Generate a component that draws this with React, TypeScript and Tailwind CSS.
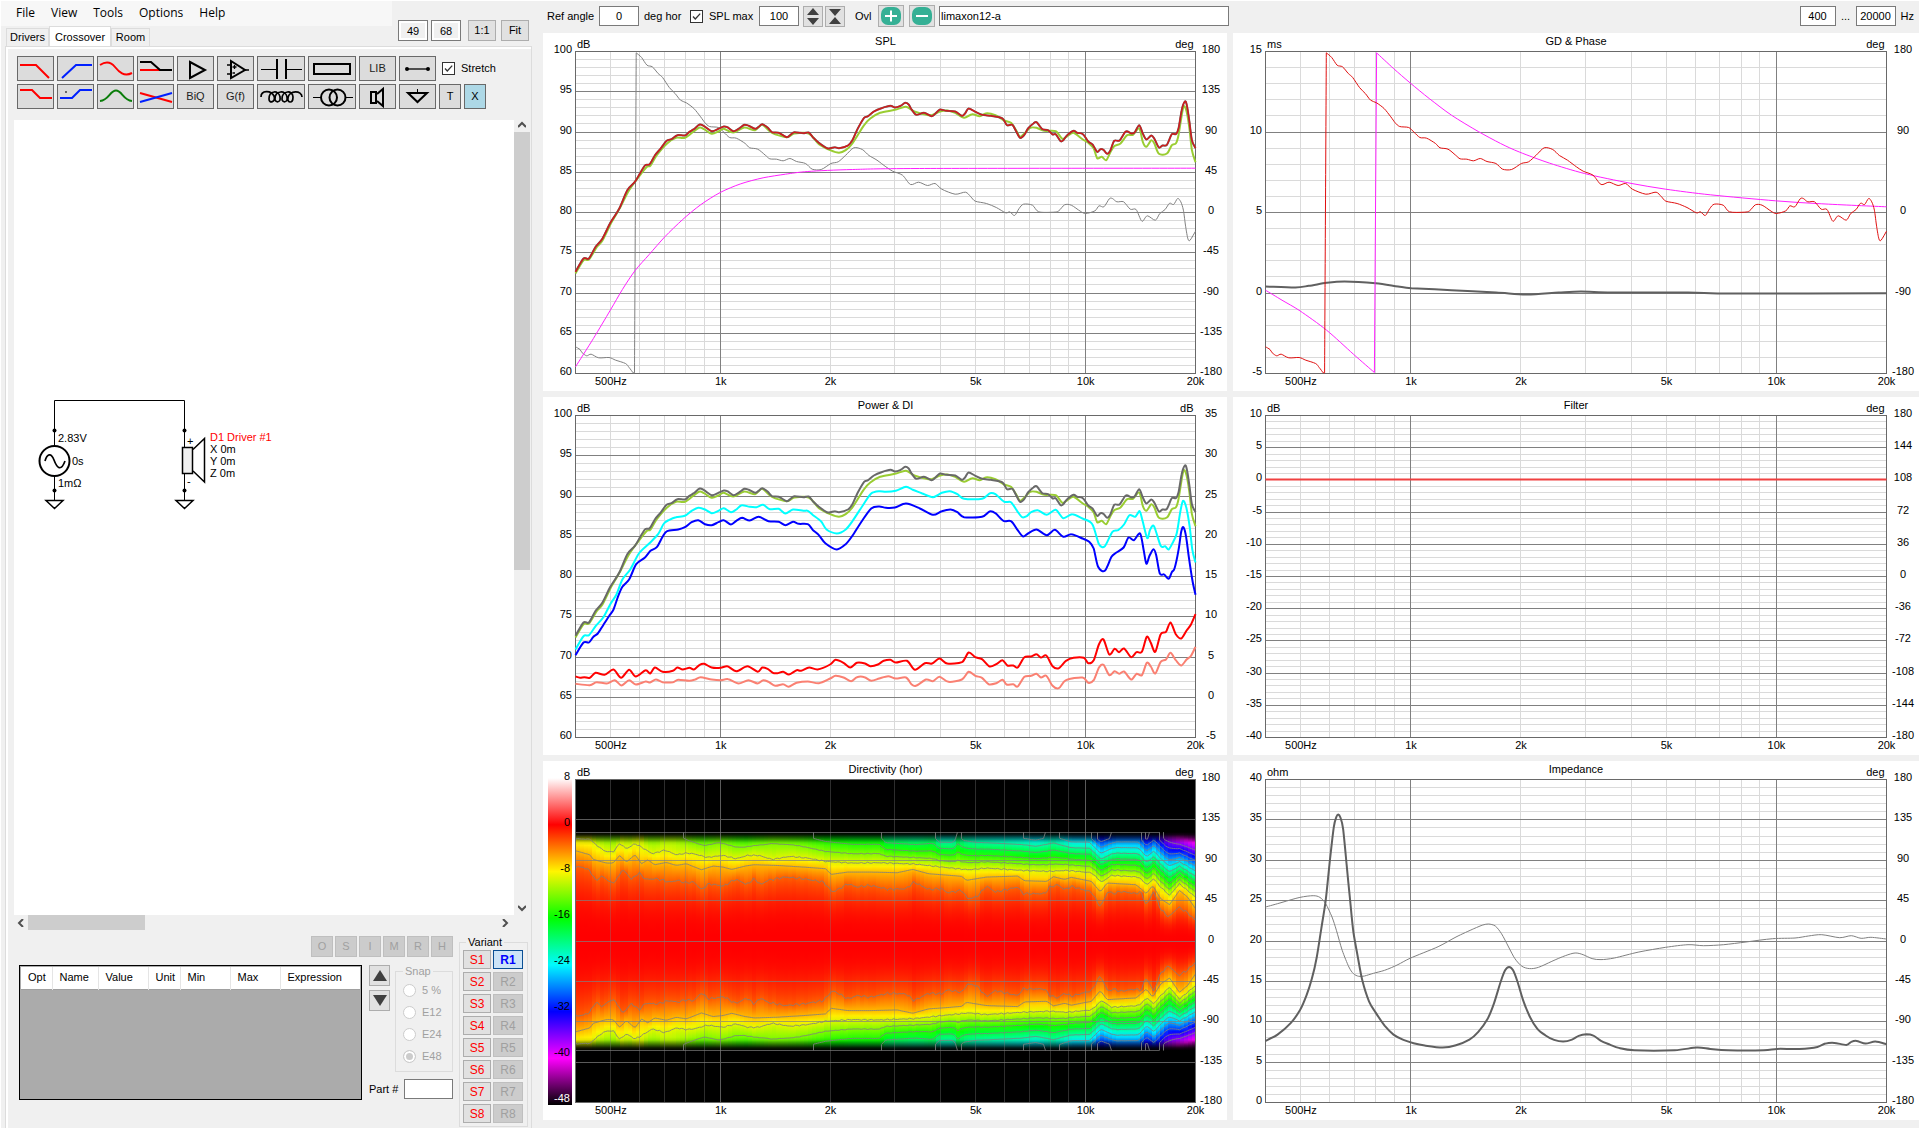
import React from 'react';

/* ---------- chart geometry ---------- */

const F_MIN = 400;
const F_MAX = 20000;
const LEFT = 32.5;
const TOP = 18.5;

const MINOR_F = [500, 600, 700, 800, 900, 2000, 3000, 4000, 5000, 6000, 7000, 8000, 9000];
const MAJOR_F = [1000, 10000];
const F_LABELS: [number, string][] = [
  [500, '500Hz'],
  [1000, '1k'],
  [2000, '2k'],
  [5000, '5k'],
  [10000, '10k'],
  [20000, '20k'],
];

type Pt = [number, number];
type Space = { x: number; y: number; w: number; h: number };
type Trace = { parts: string[]; space: Space; color: string; width: number };

const parse = (s: string): Pt[] =>
  s.trim().split(/\s+/).map((p) => p.split(',').map(Number) as Pt);

const snap = (v: number) => Math.floor(v) + 0.5;
const fx = (f: number, w: number) => LEFT + (Math.log(f / F_MIN) / Math.log(F_MAX / F_MIN)) * w;

/* Catmull-Rom through the points of each part; parts are joined by straight lines. */
function tracePath(parts: string[], sp: Space, w: number, h: number): string {
  let d = '';
  parts.forEach((part) => {
    const p = parse(part).map(
      ([x, y]): Pt => [LEFT + ((x - sp.x) / sp.w) * w, TOP + ((y - sp.y) / sp.h) * h],
    );
    d += `${d ? 'L' : 'M'}${p[0][0].toFixed(1)} ${p[0][1].toFixed(1)}`;
    for (let i = 0; i < p.length - 1; i++) {
      const a = p[Math.max(0, i - 1)];
      const b = p[i];
      const c = p[i + 1];
      const e = p[Math.min(p.length - 1, i + 2)];
      const k = 7;
      d += `C${(b[0] + (c[0] - a[0]) / k).toFixed(1)} ${(b[1] + (c[1] - a[1]) / k).toFixed(1)} ${(c[0] - (e[0] - b[0]) / k).toFixed(1)} ${(c[1] - (e[1] - b[1]) / k).toFixed(1)} ${c[0].toFixed(1)} ${c[1].toFixed(1)}`;
    }
  });
  return d;
}

/* ---------- trace data ---------- */

const S_SPL: Space = { x: 80, y: 154, w: 1388, h: 966 };
const S_PWR: Space = { x: 80, y: 76, w: 1388, h: 966 };
const S_GD: Space = { x: 103, y: 154, w: 1392, h: 966 };
const S_IMP: Space = { x: 103, y: 72, w: 1392, h: 970 };

const SPL_REF =
  '80,815 98,775 110,775 125,740 140,716 158,668 178,625 196,570 213,545 225,518 236,495 246,492 258,465 270,446 284,422 295,417 308,405 325,406 335,395 345,387 358,373 368,378 385,393 400,386 412,379 420,381 433,393 445,386 458,374 468,377 482,386 490,380 498,372 510,382 520,396 535,398 553,411 562,403 570,396 590,399 602,397 612,412 625,428 645,445 660,441 670,444 690,436 700,420 712,385 726,353 735,348 748,334 765,324 785,317 795,322 808,317 818,308 826,313 832,327 843,344 860,338 877,348 885,341 896,328 910,332 930,334 945,347 952,340 960,325 975,335 990,344 1010,347 1035,354 1046,375 1058,374 1067,395 1075,413 1085,404 1093,385 1105,370 1112,366 1125,387 1138,390 1148,403 1155,402 1166,423 1172,420 1180,406 1195,392 1203,398 1216,402 1228,424 1238,434 1248,455 1255,447 1262,449 1270,461 1277,452 1286,422 1298,421 1312,394 1325,400 1332,396 1342,375 1350,400 1358,418 1369,406 1376,416 1386,442 1394,436 1404,434 1415,402 1424,402 1430,385 1437,330 1444,304 1448,312 1454,360 1460,420 1468,444';
const SPL_LW =
  '80,820 98,780 110,778 127,742 140,722 160,668 180,622 200,570 225,524 240,500 248,496 262,465 285,430 305,413 325,413 345,393 358,382 368,387 385,401 400,394 412,386 433,397 458,382 482,390 498,374 520,398 553,411 570,400 602,400 625,432 650,450 670,458 685,450 700,430 726,375 740,355 762,338 795,329 820,320 840,335 870,345 880,344 896,334 912,331 930,338 950,353 968,342 985,348 1000,339 1020,345 1040,361 1055,368 1067,392 1075,410 1085,400 1098,383 1112,383 1130,392 1155,393 1170,416 1182,407 1195,398 1216,418 1228,428 1240,445 1248,474 1258,470 1268,480 1278,455 1286,438 1300,430 1315,405 1328,404 1342,385 1350,425 1358,440 1369,420 1376,430 1386,461 1404,460 1415,435 1424,430 1430,405 1440,325 1446,325 1454,380 1460,450 1468,486';
const PHASE = [
  '80,1040 90,1048 95,1058 105,1067 115,1062 132,1073 155,1072 170,1080 192,1090 200,1102 209,1118',
  '212,1118 216,158',
  '216,158 228,172 240,195 252,200 265,220 275,232 290,262 303,280 315,300 328,308 345,325 360,350 370,368 380,379 400,382 412,396 425,412 440,414 460,430 470,443 488,447 505,465 515,476 530,477 545,482 560,475 575,484 595,490 610,507 630,508 652,490 668,485 685,465 703,443 722,448 737,466 755,480 775,500 790,513 812,525 830,553 848,546 868,556 885,550 900,567 930,582 953,576 965,590 975,603 1000,610 1022,622 1043,638 1052,635 1063,646 1073,625 1083,612 1103,615 1117,635 1150,636 1162,632 1175,614 1190,615 1210,633 1222,640 1243,632 1252,617 1263,620 1275,596 1282,595 1292,605 1307,605 1322,627 1335,628 1348,663 1360,647 1378,660 1388,640 1400,628 1410,609 1419,613 1428,595 1435,605 1441,630 1446,680 1451,716 1456,720 1468,693',
];
const TARGET =
  '80,1100 120,1015 158,930 185,868 213,812 245,763 280,710 320,658 360,614 404,577 450,551 500,533 550,522 600,514 700,508 850,505 1468,504';
const TARGET_PHASE = [
  '103,870 140,900 180,932 240,990 300,1062 347,1117',
  '352,158 390,205 427,248 470,295 520,345 580,394 630,430 673,456 740,489 818,520 920,549 1000,567 1100,584 1246,602 1350,611 1495,620',
];
const GROUP_DELAY =
  '103,859 170,862 200,857 240,848 280,844 350,849 400,859 430,864 520,870 620,877 690,883 760,877 810,874 870,877 1050,877 1150,880 1495,879';
const EARLY =
  '80,778 98,738 110,735 125,708 142,682 158,642 172,612 185,568 203,537 222,490 245,460 265,432 278,400 290,389 305,381 325,377 340,362 355,353 370,358 385,369 400,362 412,354 428,366 440,358 452,345 470,350 485,351 500,344 515,357 535,356 550,370 567,358 590,362 600,362 612,375 630,394 642,418 665,430 685,418 700,393 725,342 742,310 760,303 775,305 797,302 820,290 835,299 855,309 880,321 900,308 918,303 935,312 950,326 990,326 1008,309 1020,312 1040,335 1055,336 1070,365 1080,381 1090,378 1100,366 1115,360 1135,374 1155,359 1172,384 1192,372 1215,385 1237,402 1252,462 1265,468 1282,425 1295,420 1308,403 1320,375 1333,380 1343,363 1350,395 1360,444 1366,420 1375,408 1390,467 1400,468 1408,478 1418,455 1426,430 1434,365 1440,332 1447,350 1455,410 1461,480 1468,517';
const POWER =
  '80,795 98,757 110,757 120,740 130,730 142,705 155,678 165,658 175,620 185,590 200,568 216,522 235,503 248,482 262,471 275,440 285,423 310,418 325,411 340,396 355,390 370,402 385,405 400,396 412,390 428,403 440,392 453,383 470,391 490,380 512,393 535,395 550,405 567,395 580,401 600,402 612,420 625,435 640,460 665,478 685,462 700,437 720,395 742,355 760,349 775,353 795,352 820,340 850,354 880,374 900,363 920,358 935,366 950,381 990,380 1007,364 1020,369 1038,392 1055,393 1070,420 1082,439 1093,430 1112,418 1135,435 1153,419 1172,440 1190,432 1215,445 1230,455 1240,475 1250,530 1265,542 1280,500 1290,488 1307,472 1318,442 1330,450 1344,430 1352,480 1358,521 1365,497 1374,477 1380,495 1388,550 1398,553 1408,566 1415,546 1421,535 1430,480 1436,425 1441,411 1447,440 1453,500 1461,570 1468,614';
const POWER_DI =
  '80,859 90,863 100,861 112,863 125,848 145,854 165,838 182,863 200,839 215,859 237,840 247,850 258,832 275,845 298,842 308,832 320,838 335,833 345,838 358,824 368,821 385,832 405,833 420,828 440,843 465,828 488,845 498,832 510,836 522,848 532,849 545,845 558,853 575,840 585,842 603,832 622,838 650,823 662,809 680,818 695,832 710,818 728,820 740,828 757,823 770,812 785,809 797,817 822,812 840,839 862,819 878,820 895,805 912,820 945,816 960,787 975,801 990,807 1007,829 1022,822 1036,810 1047,826 1060,826 1070,832 1085,801 1100,799 1112,792 1122,802 1134,796 1148,828 1162,834 1178,812 1195,803 1218,803 1228,819 1240,810 1252,762 1262,748 1275,793 1287,776 1297,786 1308,775 1324,801 1336,786 1348,785 1359,740 1368,758 1378,785 1390,732 1402,725 1412,697 1424,732 1436,745 1448,721 1458,703 1468,672';
const EARLY_DI =
  '80,881 112,885 127,876 150,880 168,870 183,886 200,870 215,883 237,874 247,877 260,868 275,876 298,876 310,869 335,872 348,868 360,861 385,868 405,870 422,867 445,880 467,870 488,880 500,870 512,875 527,887 545,882 557,890 575,878 600,874 625,879 650,865 662,857 680,862 697,873 710,861 727,861 742,872 760,865 780,858 797,865 820,862 832,882 842,887 865,868 880,873 895,860 915,875 945,868 960,845 975,857 990,863 1005,882 1022,879 1036,869 1045,883 1060,882 1070,889 1085,860 1100,857 1112,851 1122,862 1134,857 1148,887 1162,894 1178,870 1215,862 1228,878 1240,870 1252,832 1262,824 1275,855 1287,843 1297,851 1308,844 1324,868 1336,851 1348,855 1359,818 1368,829 1378,850 1390,815 1402,808 1412,788 1424,810 1436,826 1448,808 1458,797 1468,770';
const IMPEDANCE =
  '103,857 130,838 160,803 180,765 195,720 207,670 218,605 228,520 238,435 247,320 256,215 262,184 266,177 271,186 277,220 285,330 293,440 300,530 310,605 320,675 335,738 350,772 370,811 390,838 412,854 435,864 460,871 500,877 530,870 560,853 580,830 600,793 615,745 630,680 640,645 649,635 658,645 668,680 680,733 695,783 712,820 730,840 750,854 770,859 790,853 805,842 822,837 838,841 855,857 875,868 895,878 930,885 1020,885 1070,877 1100,881 1140,885 1220,885 1250,881 1300,881 1340,875 1358,865 1378,863 1405,869 1416,860 1428,857 1448,865 1470,859 1495,867';
const IMP_PHASE =
  '103,455 140,441 180,426 210,421 225,426 238,445 252,485 262,525 275,585 290,635 300,655 312,663 325,662 345,654 370,645 400,628 427,609 490,574 530,545 570,520 590,509 603,506 618,512 632,535 648,575 662,610 678,633 695,640 715,636 745,618 775,601 797,593 815,598 835,610 855,613 885,608 940,590 1000,576 1050,568 1085,571 1130,568 1180,560 1240,550 1290,548 1320,542 1350,538 1390,547 1416,541 1438,549 1460,546 1495,551';

/* ---------- chart components ---------- */

type ChartProps = {
  title: string;
  leftUnit: string;
  rightUnit: string;
  left: number[];
  right: number[];
  divisions: number;
  wide?: boolean;
  tall?: boolean;
  traces?: Trace[];
  leftLabels?: boolean;
  dark?: boolean;
  children?: React.ReactNode;
};

function range(from: number, to: number, step: number): number[] {
  const out: number[] = [];
  const n = Math.round((to - from) / step);
  for (let i = 0; i <= n; i++) out.push(from + i * step);
  return out;
}

function Chart({
  title, leftUnit, rightUnit, left, right, divisions,
  wide, tall, traces = [], leftLabels = true, dark, children,
}: ChartProps) {
  const vw = wide ? 686 : 684;
  const vh = tall ? 359 : 358;
  const w = wide ? 621 : 620;
  const h = tall ? 323 : 322;
  const right_ = LEFT + w;
  const bottom = TOP + h;
  const row = (i: number, n: number) => snap(TOP + (i / n) * h);
  const majors = left.length - 1;
  const minorColor = dark ? '#808080' : '#dadada';
  const rightX = wide ? 670 : 668;
  return (
    <svg
      viewBox={`0 0 ${vw} ${vh}`}
      role="img"
      aria-label={title}
      className="block h-auto w-full bg-white text-[11px]"
    >
      {children}
      <g stroke={minorColor} strokeWidth="1" opacity={dark ? 0.35 : 1}>
        {!dark &&
          range(1, divisions - 1, 1).map((i) => (
            <line key={i} x1={LEFT} x2={right_} y1={row(i, divisions)} y2={row(i, divisions)} />
          ))}
        {MINOR_F.map((f) => (
          <line key={f} x1={snap(fx(f, w))} x2={snap(fx(f, w))} y1={TOP} y2={bottom} />
        ))}
      </g>
      <g stroke="#808080" strokeWidth="1" opacity={dark ? 0.7 : 1}>
        {range(1, majors - 1, 1).map((i) => (
          <line key={i} x1={LEFT} x2={right_} y1={row(i, majors)} y2={row(i, majors)} />
        ))}
        {MAJOR_F.map((f) => (
          <line key={f} x1={snap(fx(f, w))} x2={snap(fx(f, w))} y1={TOP} y2={bottom} />
        ))}
      </g>
      <rect x={LEFT} y={TOP} width={w} height={h} fill="none" stroke="#696969" />
      {traces.map((t, i) => (
        <path
          key={i}
          d={tracePath(t.parts, t.space, w, h)}
          fill="none"
          stroke={t.color}
          strokeWidth={t.width}
          strokeLinejoin="round"
        />
      ))}
      <text x={LEFT + w / 2} y="12" textAnchor="middle">{title}</text>
      <text x="34" y="15">{leftUnit}</text>
      <text x={right_ - 2} y="15" textAnchor="end">{rightUnit}</text>
      {leftLabels &&
        left.map((v, i) => (
          <text key={v} x="29" y={row(i, majors) + 1.5} textAnchor="end">{v}</text>
        ))}
      {right.map((v, i) => (
        <text key={v} x={rightX} y={row(i, right.length - 1) + 1.5} textAnchor="middle">{v}</text>
      ))}
      {F_LABELS.map(([f, label]) => (
        <text key={label} x={fx(f, w)} y={vh - 6} textAnchor="middle">{label}</text>
      ))}
    </svg>
  );
}

/* ---------- directivity heat map ---------- */

const C3 = parse('80,335 95,335 112,345 125,375 140,362 160,383 172,375 183,345 192,350 205,372 222,352 237,372 262,370 290,380 308,375 325,382 345,380 362,403 378,385 412,392 437,372 450,378 463,388 480,370 495,388 510,375 550,365 590,370 635,380 655,410 668,402 690,385 710,395 740,390 780,402 820,400 838,380 870,402 900,400 912,412 945,405 958,430 978,425 1000,392 1020,410 1070,395 1082,415 1130,415 1142,395 1160,388 1175,403 1190,393 1235,410 1255,455 1272,408 1285,415 1300,408 1335,415 1345,408 1358,450 1374,408 1390,462 1408,485 1430,455 1450,472 1468,495');
const C6 = parse('80,286 112,298 120,312 149,323 164,323 179,300 194,320 213,298 228,325 242,313 257,328 283,321 306,330 328,325 362,343 388,332 410,335 430,342 460,332 480,328 530,330 590,335 640,340 652,357 690,350 740,350 800,352 835,342 870,355 920,360 945,363 955,375 1000,365 1070,362 1085,376 1135,378 1150,364 1175,372 1190,366 1235,378 1255,410 1270,383 1335,388 1358,415 1372,390 1390,430 1410,448 1432,405 1450,425 1468,460');
const C9 = parse('80,250 115,252 120,262 145,287 164,290 179,264 194,280 213,265 224,272 252,295 280,284 306,298 328,293 345,295 375,306 410,300 440,310 465,300 490,300 520,312 560,303 600,308 640,318 700,323 760,322 840,326 900,335 960,343 1000,338 1080,345 1140,348 1180,345 1235,352 1258,380 1280,360 1340,365 1360,388 1374,370 1390,395 1410,420 1432,385 1468,425');
const EDGE = parse('80,-9 115,-9 122,-11 150,-12 175,-12 182,-10 200,-11 225,-9 240,-12 265,-12 270,-11 300,-11 365,-14 400,-13 460,-15 520,-13 580,-14 640,-16 700,-17 760,-17 775,-20 840,-21 880,-20 895,-23 925,-23 935,-20 950,-22 980,-23 1080,-24 1110,-25 1150,-23 1190,-26 1230,-26 1255,-32 1290,-29 1340,-29 1358,-34 1375,-31 1400,-37 1430,-40 1468,-43');

function at(pts: Pt[], x: number): number {
  for (let i = 1; i < pts.length; i++) {
    if (x <= pts[i][0]) {
      const [x0, y0] = pts[i - 1];
      const [x1, y1] = pts[i];
      return y0 + ((x - x0) / (x1 - x0)) * (y1 - y0);
    }
  }
  return pts[pts.length - 1][1];
}

const MID = 558;
const RIM = 310;

const PALETTE: [number, number[]][] = [
  [8, [255, 255, 255]],
  [0, [255, 0, 0]],
  [-8, [255, 245, 0]],
  [-16, [0, 255, 0]],
  [-24, [0, 250, 255]],
  [-32, [0, 0, 255]],
  [-40, [255, 0, 255]],
  [-48, [0, 0, 0]],
];

function colorOf(db: number, fade: number): string {
  let c = PALETTE[PALETTE.length - 1][1];
  for (let i = 1; i < PALETTE.length; i++) {
    if (db >= PALETTE[i][0]) {
      const t = (PALETTE[i - 1][0] - db) / 8;
      c = PALETTE[i][1].map((v, k) => PALETTE[i - 1][1][k] * (1 - t) + v * t);
      break;
    }
  }
  return `rgb(${c.map((v) => Math.round(v * fade)).join(',')})`;
}

function knots(x: number): Pt[] {
  const ripple = Math.sin(x * 0.37) * 2 + Math.sin(x * 0.91) * 2;
  const d3 = MID - at(C3, x) + ripple;
  const d6 = Math.max(d3 + 10, MID - at(C6, x));
  const d9 = Math.max(d6 + 10, MID - at(C9, x) + ripple * 0.5);
  return [[d3, -3], [d6, -6], [d9, -9], [Math.max(RIM, d9 + 2), Math.min(-9.1, at(EDGE, x))]];
}

function level(k: Pt[], d: number): number {
  if (d <= k[0][0]) return -3 * Math.pow(d / k[0][0], 2.4);
  for (let i = 1; i < k.length; i++) {
    if (d <= k[i][0]) {
      return k[i - 1][1] + ((d - k[i - 1][0]) / (k[i][0] - k[i - 1][0])) * (k[i][1] - k[i - 1][1]);
    }
  }
  return k[k.length - 1][1];
}

function distanceOf(k: Pt[], db: number): number | null {
  for (let i = 0; i < k.length; i++) {
    if (k[i][1] <= db) {
      if (i === 0) return k[0][0];
      const t = (k[i - 1][1] - db) / (k[i - 1][1] - k[i][1]);
      return k[i - 1][0] + t * (k[i][0] - k[i - 1][0]);
    }
  }
  return null;
}

const STEPS = [-328, -320, -312, -304, -296, ...range(-288, 288, 16), 296, 304, 312, 320, 328];
const COL_W = 4;

function HeatMap() {
  const w = 620;
  const h = 323;
  const toY = (y: number) => TOP + ((y - 72) / 970) * h;
  const yTop = toY(MID - 328);
  const yBottom = toY(MID + 328);
  const columns = range(0, w / COL_W - 1, 1).map((i) => ({
    x: LEFT + i * COL_W,
    k: knots(80 + ((i + 0.5) * COL_W * 1388) / w),
  }));

  const contours: string[] = [];
  range(1, 12, 1).forEach((n) => {
    [-1, 1].forEach((side) => {
      let d = '';
      let open = false;
      for (let px = 0; px <= w; px += 2) {
        const dist = distanceOf(knots(80 + (px * 1388) / w), -3 * n);
        const inside = dist !== null && dist < RIM;
        const x = LEFT + px;
        const rim = toY(MID + side * 328).toFixed(1);
        if (inside) {
          const y = toY(MID + side * (dist as number)).toFixed(1);
          d += open ? `L${x} ${y}` : px === 0 ? `M${x} ${y}` : `M${x} ${rim}L${x} ${y}`;
        } else if (open) {
          d += `L${x} ${rim}`;
        }
        open = inside;
      }
      if (d) contours.push(d);
    });
  });

  return (
    <g>
      <defs>
        <linearGradient id="scale" x1="0" x2="0" y1="0" y2="1">
          {PALETTE.map(([db]) => (
            <stop key={db} offset={(8 - db) / 56} stopColor={colorOf(db, 1)} />
          ))}
        </linearGradient>
        {columns.map((c, i) => (
          <linearGradient key={i} id={`col${i}`} x1="0" x2="0" y1="0" y2="1">
            {STEPS.map((s) => {
              const a = Math.abs(s);
              const fade = Math.max(0, Math.min(1, (323 - a) / 29));
              return (
                <stop key={s} offset={((s + 328) / 656).toFixed(4)} stopColor={colorOf(level(c.k, a), fade)} />
              );
            })}
          </linearGradient>
        ))}
      </defs>
      <rect x={LEFT} y={TOP} width={w} height={h} fill="#000" />
      {columns.map((c, i) => (
        <rect key={i} x={c.x} y={yTop} width={COL_W} height={yBottom - yTop} fill={`url(#col${i})`} shapeRendering="crispEdges" />
      ))}
      <g fill="none" stroke="#808080" strokeWidth="1" opacity="0.85">
        {contours.map((d, i) => (
          <path key={i} d={d} />
        ))}
        <path d={`M${LEFT} ${snap(yTop)}H616M${LEFT} ${snap(yBottom)}H616`} opacity="0.8" />
      </g>
      <rect x="5" y="17" width="24" height="327" fill="url(#scale)" />
      {PALETTE.map(([db], i) => (
        <text key={db} x="27" y={19 + i * 46} textAnchor="end" fill={db === -48 ? '#fff' : '#000'}>
          {db}
        </text>
      ))}
    </g>
  );
}

/* ---------- controls ---------- */

const toolBtn =
  'flex h-[25px] shrink-0 items-center justify-center border border-[#696969] bg-[#dcdcdc] text-[#222]';
const field = 'h-[20px] border border-[#7a7a7a] bg-white text-center outline-none';
const pushBtn = 'flex items-center justify-center border border-[#adadad] bg-[#e1e1e1]';

function Tool({ label, width = 37, children }: { label: string; width?: 37 | 48; children: React.ReactNode }) {
  return (
    <button aria-label={label} className={`${toolBtn} ${width === 48 ? 'w-12' : 'w-[37px]'}`}>
      {children}
    </button>
  );
}

function Draw({ w = 37, children }: { w?: number; children: React.ReactNode }) {
  return (
    <svg width={w} height="25" viewBox={`0 0 ${w} 25`} fill="none" stroke="#000" strokeWidth="2" className="shrink-0">
      {children}
    </svg>
  );
}

function CheckMark() {
  return (
    <svg viewBox="0 0 13 13" className="pointer-events-none absolute inset-0 h-[13px] w-[13px]" fill="none" stroke="#333" strokeWidth="1.3">
      <path d="M3 6.5L5.3 9L10.2 3.6" />
    </svg>
  );
}

function Tick({ id, label }: { id: string; label: string }) {
  return (
    <div className="flex items-center gap-1.5">
      <span className="relative h-[13px] w-[13px]">
        <input id={id} type="checkbox" defaultChecked className="block h-[13px] w-[13px] appearance-none border border-[#333] bg-white" />
        <CheckMark />
      </span>
      <label htmlFor={id}>{label}</label>
    </div>
  );
}

function Toolbox() {
  return (
    <div className="flex flex-col gap-[3px] pt-[7px] pl-[9px]">
      <div className="flex items-center gap-[3px]">
        <Tool label="Low pass"><Draw><path stroke="#f00" d="M3 9H19L32 22" /></Draw></Tool>
        <Tool label="High pass"><Draw><path stroke="#0020ff" d="M5 22L19 9H35" /></Draw></Tool>
        <Tool label="All pass"><Draw><path stroke="#f00" d="M3 9C9 5 14 6 18 11S27 21 35 17" /></Draw></Tool>
        <Tool label="Delay"><Draw><path stroke="#f00" d="M3 14H23" /><path d="M3 6H14L23 14H35" /></Draw></Tool>
        <Tool label="Buffer"><Draw><path d="M13 6L28 14L13 22Z" /></Draw></Tool>
        <Tool label="Op amp">
          <Draw>
            <path d="M14 5L28 14L14 22Z" />
            <path strokeWidth="1.3" d="M10 9H14M10 18H14M28 14H32M15.5 11H19.500M17.500 9V13M15.500 17H18" />
          </Draw>
        </Tool>
        <Tool label="Capacitor" width={48}><Draw w={48}><path strokeWidth="1" d="M4 13.500H20M29 13.500H45" /><path d="M20 3V23M29 3V23" /></Draw></Tool>
        <Tool label="Resistor" width={48}><Draw w={48}><rect x="6" y="8" width="36" height="10" /></Draw></Tool>
        <Tool label="Library">LIB</Tool>
        <Tool label="Wire"><Draw><path strokeWidth="1.3" d="M8 13H29" /><circle cx="8" cy="13" r="1" /><circle cx="29" cy="13" r="1" /></Draw></Tool>
        <div className="pl-[3px]"><Tick id="stretch" label="Stretch" /></div>
      </div>
      <div className="flex items-center gap-[3px]">
        <Tool label="Low shelf"><Draw><path stroke="#f00" d="M3 6H15L23 14H35" /></Draw></Tool>
        <Tool label="High shelf"><Draw><path stroke="#0020ff" d="M3 14H15L23 6H35" /><circle cx="9" cy="8" r="0.600" stroke="#333" strokeWidth="1" /></Draw></Tool>
        <Tool label="Peak"><Draw><path stroke="#0a7d0a" d="M3 17C12 16 13 6.500 19 6.500S26 16 35 17" /></Draw></Tool>
        <Tool label="Tilt"><Draw><path stroke="#f00" d="M3 9L35 18" /><path stroke="#0020ff" d="M3 18L35 9" /></Draw></Tool>
        <Tool label="Biquad">BiQ</Tool>
        <Tool label="Transfer function">G(f)</Tool>
        <Tool label="Inductor" width={48}>
          <Draw w={48}>
            <path strokeWidth="1.700" d="M4 13C4 6 14 6 17 12C19 18 12 20 12 15C12 6 22 6 23 13C24 19 18 19 18 15C18 6 29 6 30 13C31 19 25 19 25 15C25 6 36 6 36 13C36 20 30 19 31 14C32 6 45 6 45 13" />
          </Draw>
        </Tool>
        <Tool label="Transformer" width={48}><Draw w={48}><path strokeWidth="1" d="M5 13.500H13M38 13.500H45" /><circle cx="21" cy="13.500" r="8" /><circle cx="29.500" cy="13.500" r="8" /></Draw></Tool>
        <Tool label="Driver"><Draw><rect x="12" y="8" width="5" height="11" /><path d="M18 10L24 5V22L18 17" /></Draw></Tool>
        <Tool label="Ground"><Draw><path d="M9 9H28L18.500 18Z" /><path strokeWidth="1" d="M18.500 5V9" /></Draw></Tool>
        <button className="flex h-[25px] w-[22px] items-center justify-center border border-[#696969] bg-[#dcdcdc]">T</button>
        <button className="flex h-[25px] w-[22px] items-center justify-center border border-[#696969] bg-[#add8e6]">X</button>
      </div>
    </div>
  );
}

function Schematic() {
  return (
    <svg className="block h-[420px] w-full text-[11px]" fill="none" stroke="#000" strokeWidth="1">
      <path d="M40.500 326V280.500H170.500V328M40.500 356V381M170.500 354V381" />
      <g strokeWidth="2">
        <circle cx="40.500" cy="341" r="15" />
        <path strokeWidth="1.700" d="M31 341C33 334 37 332 40 340S47 352 51 341" />
        <rect x="168.500" y="327.500" width="10" height="26" strokeWidth="1.500" fill="#f0f0f0" />
        <path strokeWidth="1.500" d="M179 329.500L190.500 318.500V362L179 351" />
        <path strokeWidth="1.500" d="M32 380.500H49L40.500 388.500ZM162 380.500H179L170.500 388.500Z" />
      </g>
      <g fill="#000" stroke="none">
        <circle cx="40.500" cy="310.500" r="2" />
        <circle cx="40.500" cy="370.500" r="2" />
        <circle cx="170.500" cy="310.500" r="2" />
        <circle cx="170.500" cy="370.500" r="2" />
        <text x="44" y="322">2.83V</text>
        <text x="58" y="345">0s</text>
        <text x="44" y="367">1mΩ</text>
        <text x="173" y="325">+</text>
        <text x="173" y="365">-</text>
        <text x="196" y="321" fill="#f00">D1 Driver #1</text>
        <text x="196" y="333">X 0m</text>
        <text x="196" y="345">Y 0m</text>
        <text x="196" y="357">Z 0m</text>
      </g>
    </svg>
  );
}

function Chevron({ d, label }: { d: string; label: string }) {
  return (
    <button aria-label={label} className="flex h-[15px] w-[15px] shrink-0 items-center justify-center">
      <svg width="8" height="8" viewBox="0 0 8 8" fill="none" stroke="#505050" strokeWidth="2"><path d={d} /></svg>
    </button>
  );
}

const COLUMNS: [string, string][] = [
  ['Opt', 'w-[31px]'],
  ['Name', 'w-[46px]'],
  ['Value', 'w-[50px]'],
  ['Unit', 'w-[32px]'],
  ['Min', 'w-[50px]'],
  ['Max', 'w-[50px]'],
  ['Expression', ''],
];

function PartEditor() {
  return (
    <div className="flex w-[435px] flex-col gap-2 pt-1.5 pl-[1px]">
      <div className="flex justify-end gap-0.5">
        {['O', 'S', 'I', 'M', 'R', 'H'].map((c) => (
          <button key={c} disabled className="h-[21px] w-[22px] border border-[#bfbfbf] bg-[#cccccc] text-[#a0a0a0]">{c}</button>
        ))}
      </div>
      <div className="flex">
        <div className="h-[135px] w-[343px] border border-black bg-[#ababab] p-px">
          <table className="w-full table-fixed border-collapse bg-white">
            <thead>
              <tr className="h-[22px] border-b border-[#a0a0a0]">
                {COLUMNS.map(([name, cls]) => (
                  <th key={name} className={`${cls} border-r border-[#e5e5e5] pl-[7px] text-left font-normal last:border-r-0`}>{name}</th>
                ))}
              </tr>
            </thead>
          </table>
        </div>
        <div className="ml-[7px] flex flex-col">
          <div className="flex gap-[5px]">
            <div className="flex flex-col gap-1">
              <button aria-label="Up" className={`${pushBtn} h-[21px] w-[21px]`}>
                <svg width="14" height="11" fill="#404040"><path d="M7 0L14 11H0Z" /></svg>
              </button>
              <button aria-label="Down" className={`${pushBtn} h-[21px] w-[21px]`}>
                <svg width="14" height="11" fill="#404040"><path d="M7 11L14 0H0Z" /></svg>
              </button>
            </div>
            <fieldset className="h-[107px] w-[58px] border border-[#dcdcdc] pl-[7px] text-[#a0a0a0]">
              <legend className="px-0.5 leading-3">Snap</legend>
              <div className="flex flex-col gap-[9px] pt-[7px]">
                {['5 %', 'E12', 'E24', 'E48'].map((v, i) => (
                  <label key={v} className="flex h-[13px] items-center gap-[6px]">
                    <input
                      type="radio"
                      name="snap"
                      disabled
                      defaultChecked={i === 3}
                      className="h-[13px] w-[13px] shrink-0 appearance-none rounded-full border border-[#cccccc] bg-white checked:bg-[#cccccc] checked:shadow-[inset_0_0_0_2px_#fff]"
                    />
                    {v}
                  </label>
                ))}
              </div>
            </fieldset>
          </div>
          <div className="mt-[7px] flex items-center justify-between">
            <label htmlFor="part">Part #</label>
            <input id="part" className={`${field} w-[49px]`} />
          </div>
        </div>
      </div>
    </div>
  );
}

function Variants() {
  return (
    <fieldset className="mt-1.5 ml-1.5 h-[191px] w-[69px] border border-[#dcdcdc] px-[3px]">
      <legend className="ml-[3px] px-0.5 leading-3">Variant</legend>
      <div className="flex flex-col gap-[3px] pt-0.5">
        {[1, 2, 3, 4, 5, 6, 7, 8].map((n) => (
          <div key={n} className="flex gap-0.5">
            <button className="h-[19px] w-[28px] border border-[#adadad] bg-[#e1e1e1] text-xs leading-4 text-[#f00]">S{n}</button>
            {n === 1 ? (
              <button className="h-[19px] w-[30px] border border-[#0a4f94] bg-[#cce4f7] text-xs leading-4 font-bold text-[#00f]">R1</button>
            ) : (
              <button disabled className="h-[19px] w-[30px] border border-[#bfbfbf] bg-[#cccccc] text-xs leading-4 text-[#a0a0a0]">R{n}</button>
            )}
          </div>
        ))}
      </div>
    </fieldset>
  );
}

function Sidebar() {
  return (
    <aside className="flex w-[531px] shrink-0 flex-col">
      <header className="flex justify-between">
        <div>
          <nav className='flex h-[25px] w-[391px] items-center bg-[#f7f7f7] pb-0.5 pl-[7px] font-["Open_Sans",sans-serif] text-xs'>
            {['File', 'View', 'Tools', 'Options', 'Help'].map((m) => (
              <button key={m} className="px-2">{m}</button>
            ))}
          </nav>
          <div role="tablist" className="flex h-5 items-end pl-[5px]">
            <button role="tab" className="h-[18px] w-[43px] border border-b-0 border-[#dcdcdc]">Drivers</button>
            <button role="tab" aria-selected="true" className="h-5 w-[62px] border border-b-0 border-[#dcdcdc] bg-white leading-[14px]">Crossover</button>
            <button role="tab" className="h-[18px] w-[39px] border border-b-0 border-[#dcdcdc]">Room</button>
          </div>
        </div>
        <div className="flex items-end gap-[5px] pr-[3px] pb-[5px]">
          <div className="flex gap-[3px]">
            <input aria-label="Width" defaultValue="49" className="h-[21px] w-[30px] border border-[#7a7a7a] bg-[#f0f0f0] text-center shadow-[inset_0_0_0_2px_#fff]" />
            <input aria-label="Height" defaultValue="68" className="h-[21px] w-[30px] border border-[#7a7a7a] bg-[#f0f0f0] text-center shadow-[inset_0_0_0_2px_#fff]" />
          </div>
          <div className="flex gap-[5px] pl-0.5">
            <button className={`${pushBtn} h-[21px] w-[28px]`}>1:1</button>
            <button className={`${pushBtn} h-[21px] w-[28px]`}>Fit</button>
          </div>
        </div>
      </header>
      <main className="ml-1 flex grow flex-col border border-b-0 border-[#dcdcdc] bg-white pt-0.5 pl-0.5">
        <div className="flex grow flex-col bg-[#f0f0f0]">
          <Toolbox />
          <div className="mt-2 flex grow pl-1.5">
            <div className="mt-[3px] w-[500px] bg-white">
              <Schematic />
            </div>
            <div className="flex w-4 flex-col items-center">
              <Chevron label="Scroll up" d="M0 6L4 2L8 6" />
              <div className="flex w-full grow flex-col">
                <div className="h-[57%] w-full bg-[#cdcdcd]" />
              </div>
              <Chevron label="Scroll down" d="M0 2L4 6L8 2" />
            </div>
          </div>
          <div className="flex h-[15px] w-[504px] pl-[5px]">
            <Chevron label="Scroll left" d="M6 0L2 4L6 8" />
            <div className="flex h-full grow">
              <div className="h-full w-[117px] bg-[#cdcdcd]" />
            </div>
            <Chevron label="Scroll right" d="M2 0L6 4L2 8" />
          </div>
          <div className="flex h-[198px] pl-[10px]">
            <PartEditor />
            <Variants />
          </div>
        </div>
      </main>
    </aside>
  );
}

function TopBar() {
  return (
    <div className="flex h-8 items-center pr-1 pb-0.5 pl-1">
      <label htmlFor="angle" className="w-[52px]">Ref angle</label>
      <input id="angle" defaultValue="0" className={`${field} w-10`} />
      <span className="w-[51px] pl-[5px]">deg hor</span>
      <div className="w-[69px]"><Tick id="splmax" label="SPL max" /></div>
      <input aria-label="SPL maximum" defaultValue="100" className={`${field} w-10`} />
      <div className="flex gap-0.5 pl-1">
        <button aria-label="Expand" className={`${pushBtn} h-[21px] w-5`}>
          <svg width="14" height="17" fill="#404040"><path d="M7 0L13 7H1ZM7 17L13 10H1Z" /></svg>
        </button>
        <button aria-label="Compress" className={`${pushBtn} h-[21px] w-5`}>
          <svg width="14" height="17" fill="#404040"><path d="M7 8L13 1H1ZM7 9L13 16H1Z" /></svg>
        </button>
      </div>
      <span className="w-[33px] pl-2.5">Ovl</span>
      <div className="flex gap-[5px]">
        <button aria-label="Add overlay" className={`${pushBtn} h-[22px] w-[26px]`}>
          <svg width="20" height="18" viewBox="0 0 20 18"><rect width="20" height="18" rx="7" fill="#35b095" /><path d="M10 3.500V14.500M4 9H16" stroke="#fff" strokeWidth="2" /></svg>
        </button>
        <button aria-label="Remove overlay" className={`${pushBtn} h-[22px] w-[26px]`}>
          <svg width="20" height="18" viewBox="0 0 20 18"><rect width="20" height="18" rx="7" fill="#35b095" /><path d="M4 9H16" stroke="#fff" strokeWidth="2" /></svg>
        </button>
      </div>
      <input aria-label="Overlay name" defaultValue="limaxon12-a" className="ml-1 h-5 w-[290px] border border-[#7a7a7a] bg-white pl-px outline-none" />
      <div className="ml-auto flex items-center">
        <input aria-label="From frequency" defaultValue="400" className={`${field} w-9`} />
        <span className="w-5 text-center">...</span>
        <input aria-label="To frequency" defaultValue="20000" className={`${field} w-10`} />
        <span className="pr-px pl-[5px]">Hz</span>
      </div>
    </div>
  );
}

const DEG = range(180, -180, -45);

export default function App() {
  return (
    <div className='flex min-h-screen border-t border-b border-l border-white bg-[#f0f0f0] font-["Liberation_Sans",Arial,sans-serif] text-[11px] leading-[13px] text-black'>
      <Sidebar />
      <section className="ml-[11px] flex grow flex-col">
        <TopBar />
        <div className="grid grid-cols-[684fr_686fr] gap-1.5">
          <Chart
            title="SPL" leftUnit="dB" rightUnit="deg"
            left={range(100, 60, -5)} right={DEG} divisions={40}
            traces={[
              { parts: PHASE, space: S_SPL, color: '#808080', width: 1 },
              { parts: [TARGET], space: S_SPL, color: '#ff20ff', width: 1 },
              { parts: [SPL_LW], space: S_SPL, color: '#9acd32', width: 2 },
              { parts: [SPL_REF], space: S_SPL, color: '#696969', width: 2 },
              { parts: [SPL_REF], space: S_SPL, color: '#d01c1c', width: 1.5 },
            ]}
          />
          <Chart
            wide title="GD & Phase" leftUnit="ms" rightUnit="deg"
            left={range(15, -5, -5)} right={range(180, -180, -90)} divisions={20}
            traces={[
              { parts: [GROUP_DELAY], space: S_GD, color: '#606060', width: 2 },
              { parts: TARGET_PHASE, space: S_GD, color: '#ff20ff', width: 1 },
              { parts: PHASE, space: S_SPL, color: '#e01010', width: 1 },
            ]}
          />
          <Chart
            title="Power & DI" leftUnit="dB" rightUnit="dB"
            left={range(100, 60, -5)} right={range(35, -5, -5)} divisions={40}
            traces={[
              { parts: [EARLY_DI], space: S_PWR, color: '#fa8072', width: 2 },
              { parts: [POWER_DI], space: S_PWR, color: '#ff0000', width: 2 },
              { parts: [POWER], space: S_PWR, color: '#0000ff', width: 2 },
              { parts: [EARLY], space: S_PWR, color: '#00ffff', width: 2 },
              { parts: [SPL_LW], space: S_SPL, color: '#9acd32', width: 2 },
              { parts: [SPL_REF], space: S_SPL, color: '#696969', width: 2 },
            ]}
          />
          <Chart
            wide title="Filter" leftUnit="dB" rightUnit="deg"
            left={range(10, -40, -5)} right={range(180, -180, -36)} divisions={50}
            traces={[
              { parts: ['103,268 1495,268'], space: { x: 103, y: 76, w: 1392, h: 966 }, color: '#f04040', width: 2 },
            ]}
          />
          <Chart
            tall dark title="Directivity (hor)" leftUnit="dB" rightUnit="deg"
            left={DEG} right={DEG} divisions={8} leftLabels={false}
          >
            <HeatMap />
          </Chart>
          <Chart
            wide tall title="Impedance" leftUnit="ohm" rightUnit="deg"
            left={range(40, 0, -5)} right={DEG} divisions={40}
            traces={[
              { parts: [IMP_PHASE], space: S_IMP, color: '#808080', width: 1 },
              { parts: [IMPEDANCE], space: S_IMP, color: '#606060', width: 2 },
            ]}
          />
        </div>
      </section>
    </div>
  );
}
